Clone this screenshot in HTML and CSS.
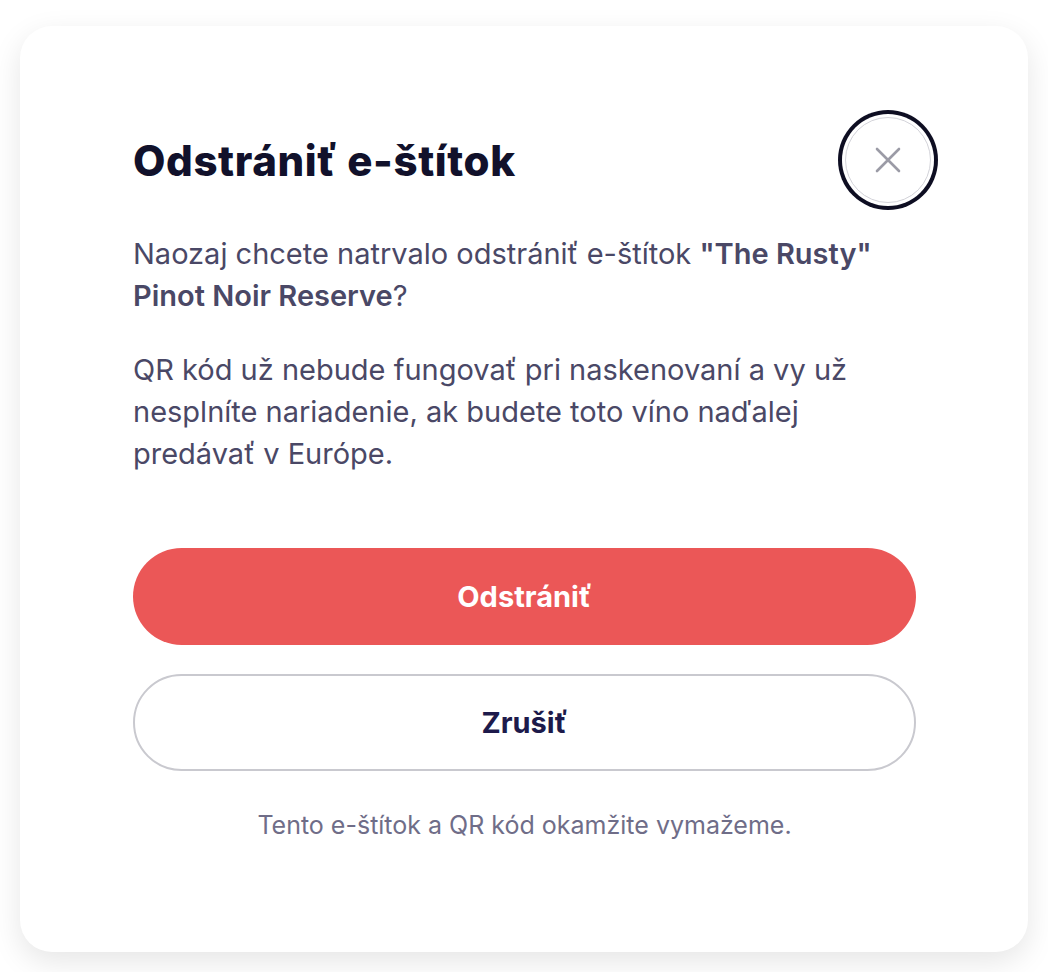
FILE: index.html
```html
<!DOCTYPE html>
<html lang="sk">
<head>
<meta charset="utf-8">
<title>Odstrániť e-štítok</title>
<link rel="stylesheet" href="styles.css">
</head>
<body>
<div class="card">
  <div class="header">
    <h1 class="title">Odstrániť e-štítok</h1>
    <button class="close" aria-label="Zavrieť">
      <svg width="26" height="26" viewBox="0 0 26 26"><path d="M2 2 L24 24 M24 2 L2 24" stroke="#9b9ba6" stroke-width="2.6" stroke-linecap="round" fill="none"/></svg>
    </button>
  </div>
  <p class="text">Naozaj chcete natrvalo odstrániť e-štítok <strong>"The Rusty" Pinot Noir Reserve</strong>?</p>
  <p class="text">QR kód už nebude fungovať pri naskenovaní a vy už nesplníte nariadenie, ak budete toto víno naďalej predávať v Európe.</p>
  <div class="actions">
    <button class="btn btn-danger">Odstrániť</button>
    <button class="btn btn-outline">Zrušiť</button>
  </div>
  <p class="note">Tento e-štítok a QR kód okamžite vymažeme.</p>
</div>
</body>
</html>
```
FILE: styles.css
```css
* { box-sizing: border-box; }
html, body { margin: 0; padding: 0; background: #ffffff; }
body {
  font-family: "Inter", "Lato", "Liberation Sans", sans-serif;
  padding: 26px 20px 20px;
}
.card {
  background: #fff;
  border-radius: 32px;
  box-shadow: 0 10px 30px rgba(0,0,0,0.10);
  padding: 91px 112px 112px 113px;
}
.header {
  display: flex;
  align-items: center;
  justify-content: space-between;
  height: 86px;
  margin-bottom: 30px;
}
.title {
  margin: 0;
  font-size: 42px;
  font-weight: 800;
  color: #11112b;
  letter-spacing: 0.6px;
}
.close {
  width: 86px;
  height: 86px;
  border-radius: 50%;
  border: 1px solid #d4d4da;
  background: #fff;
  box-shadow: 0 0 0 3px #fff, 0 0 0 7px #0e0e22;
  margin-right: -15px;
  display: flex;
  align-items: center;
  justify-content: center;
  padding: 0;
}
.text {
  margin: 0 0 32px;
  font-size: 29px;
  line-height: 42px;
  color: #4a4866;
}
.text strong { font-weight: 600; }
.actions {
  margin-top: 73px;
  display: flex;
  flex-direction: column;
  gap: 29px;
}
.btn {
  height: 97px;
  border-radius: 49px;
  font-family: inherit;
  font-size: 29px;
  font-weight: 700;
  width: 100%;
}
.btn-danger {
  background: #eb5757;
  color: #fff;
  border: none;
}
.btn-outline {
  background: #fff;
  color: #1d1a4b;
  border: 2px solid #c9c9cf;
}
.note {
  margin: 39px 0 0;
  text-align: center;
  font-size: 25px;
  line-height: 30px;
  color: #6f6d88;
}
```
